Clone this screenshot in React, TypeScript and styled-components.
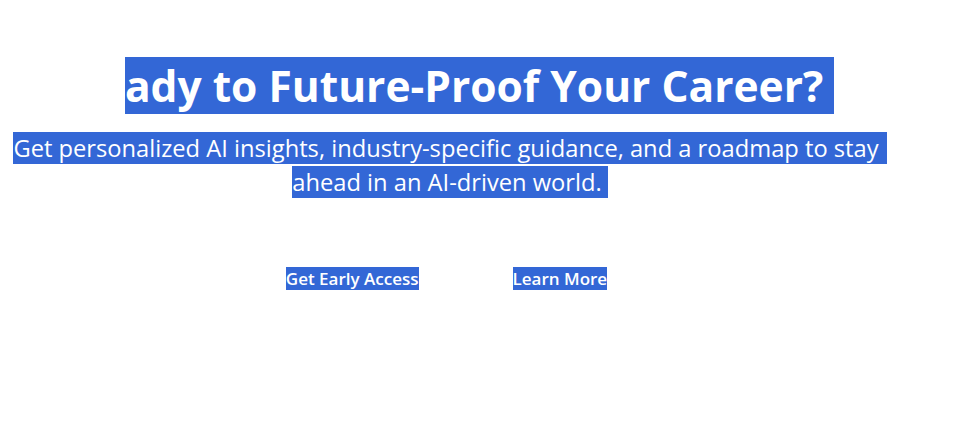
import React from "react";
import styled, { createGlobalStyle } from "styled-components";

const GlobalStyle = createGlobalStyle`
	html, body {
		margin: 0;
		background: #ffffff;
	}
	body {
		font-family: "Open Sans", "Noto Sans", sans-serif;
	}
`;

const App: React.FC = () => {
	return (
		<>
			<GlobalStyle />
			<Hero>
				<Title>
					Re<Highlight $trail={11}>ady to Future-Proof Your Career?</Highlight>
				</Title>
				<Subtitle>
					<Highlight $trail={8}>
						Get personalized AI insights, industry-specific guidance, and a roadmap to stay
					</Highlight>{" "}
					<Highlight $trail={6}>ahead in an AI-driven world.</Highlight>
				</Subtitle>
				<ButtonRow>
					<CtaButton>
						<Highlight>Get Early Access</Highlight>
					</CtaButton>
					<CtaButton>
						<Highlight>Learn More</Highlight>
					</CtaButton>
				</ButtonRow>
			</Hero>
		</>
	);
};

export default App;

const Hero = styled.section`
	width: 900px;
	padding-top: 56px;
	display: flex;
	flex-direction: column;
	align-items: center;
	text-align: center;
	color: #ffffff;
`;

const Highlight = styled.span<{ $trail?: number }>`
	background: #3367d6;
	color: #ffffff;
	padding-right: ${(p) => p.$trail ?? 0}px;
`;

const Title = styled.h1`
	margin: 0;
	padding-left: 6px;
	font-size: 42.5px;
	line-height: 60px;
	font-weight: 700;
	color: #ffffff;
	white-space: nowrap;
`;

const Subtitle = styled.p`
	margin: 15px 0 0;
	font-size: 23.7px;
	line-height: 34px;
	font-weight: 400;
	max-width: 896px;
`;

const ButtonRow = styled.div`
	margin-top: 69px;
	padding-right: 7px;
	display: flex;
	gap: 94px;
	justify-content: center;
`;

const CtaButton = styled.button`
	border: none;
	background: transparent;
	padding: 0;
	font-family: inherit;
	font-size: 17px;
	line-height: 22px;
	font-weight: 600;
	cursor: pointer;
`;
